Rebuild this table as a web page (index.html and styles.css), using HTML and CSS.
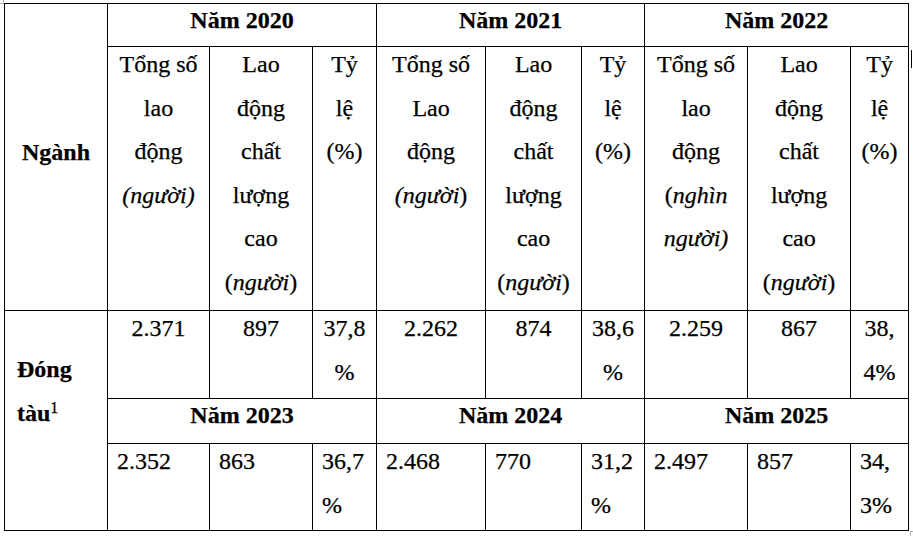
FILE: index.html
```html
<!DOCTYPE html>
<html lang="vi">
<head>
<meta charset="utf-8">
<title>Lao động ngành đóng tàu</title>
<link rel="stylesheet" href="styles.css">
</head>
<body>
<span class="mark mark-tl"></span>
<table class="tbl">
  <colgroup>
    <col class="w103"><col class="w102"><col class="w103"><col class="w64">
    <col class="w109"><col class="w96"><col class="w63">
    <col class="w103"><col class="w103"><col class="w58">
  </colgroup>
  <tr class="r-year">
    <td class="nganh" rowspan="2"><div class="t">Ngành</div></td>
    <td class="year" colspan="3"><div class="t">Năm 2020</div></td>
    <td class="year" colspan="3"><div class="t">Năm 2021</div></td>
    <td class="year" colspan="3"><div class="t">Năm 2022</div></td>
  </tr>
  <tr class="r-head">
    <td class="ctr"><div class="t">Tổng số<br>lao<br>động<br><i>(người)</i></div></td>
    <td class="ctr"><div class="t">Lao<br>động<br>chất<br>lượng<br>cao<br>(<i>người</i>)</div></td>
    <td class="ctr"><div class="t">Tỷ<br>lệ<br>(%)</div></td>
    <td class="ctr"><div class="t">Tổng số<br>Lao<br>động<br><i>(người</i>)</div></td>
    <td class="ctr"><div class="t">Lao<br>động<br>chất<br>lượng<br>cao<br>(<i>người</i>)</div></td>
    <td class="ctr"><div class="t">Tỷ<br>lệ<br>(%)</div></td>
    <td class="ctr"><div class="t">Tổng số<br>lao<br>động<br>(<i>nghìn<br>người)</i></div></td>
    <td class="ctr"><div class="t">Lao<br>động<br>chất<br>lượng<br>cao<br>(<i>người</i>)</div></td>
    <td class="ctr"><div class="t">Tỷ<br>lệ<br>(%)</div></td>
  </tr>
  <tr class="r-data1">
    <td class="branch" rowspan="3"><div class="t">Đóng<br>tàu<sup class="fn">1</sup></div></td>
    <td class="ctr"><div class="t">2.371</div></td>
    <td class="ctr"><div class="t">897</div></td>
    <td class="ctr"><div class="t">37,8<br>%</div></td>
    <td class="ctr"><div class="t">2.262</div></td>
    <td class="ctr"><div class="t">874</div></td>
    <td class="ctr"><div class="t">38,6<br>%</div></td>
    <td class="ctr"><div class="t">2.259</div></td>
    <td class="ctr"><div class="t">867</div></td>
    <td class="ctr"><div class="t">38,<br>4%</div></td>
  </tr>
  <tr class="r-year2">
    <td class="year" colspan="3"><div class="t">Năm 2023</div></td>
    <td class="year" colspan="3"><div class="t">Năm 2024</div></td>
    <td class="year" colspan="3"><div class="t">Năm 2025</div></td>
  </tr>
  <tr class="r-data2">
    <td><div class="t">2.352</div></td>
    <td><div class="t">863</div></td>
    <td><div class="t">36,7<br>%</div></td>
    <td><div class="t">2.468</div></td>
    <td><div class="t">770</div></td>
    <td><div class="t">31,2<br>%</div></td>
    <td><div class="t">2.497</div></td>
    <td><div class="t">857</div></td>
    <td><div class="t">34,<br>3%</div></td>
  </tr>
</table>
<span class="stub"></span>
<span class="mark mark-br"></span>
</body>
</html>
```
FILE: styles.css
```css
html, body {
  margin: 0;
  padding: 0;
  background: #fff;
}
body {
  position: relative;
  width: 913px;
  height: 536px;
  overflow: hidden;
  font-family: "Liberation Serif", Tinos, "DejaVu Serif", serif;
  font-size: 24px;
  color: #000;
}
.tbl {
  border-collapse: collapse;
  table-layout: fixed;
  width: 905px;
  margin: 3px 0 0 4px;
  font-family: "Liberation Serif", Tinos, "DejaVu Serif", serif;
  -webkit-text-stroke: 0.25px #000;
}
.w103 { width: 103px; }
.w102 { width: 102px; }
.w64 { width: 64px; }
.w109 { width: 109px; }
.w96 { width: 96px; }
.w63 { width: 63px; }
.w58 { width: 58px; }

.tbl td {
  border: 1px solid #000;
  padding: 0 9px;
  vertical-align: top;
  line-height: 43.6px;
  white-space: nowrap;
  text-align: left;
}
.tbl .t {
  margin-top: -4px;
}
.r-year { height: 43px; }
.r-head { height: 264px; }
.r-data1 { height: 88px; }
.r-year2 { height: 45px; }
.r-data2 { height: 87px; }

.tbl td.year {
  font-weight: bold;
  text-align: center;
}
.tbl td.year .t {
  margin-top: -5px;
}
.tbl td.ctr {
  text-align: center;
}
.tbl td.nganh {
  font-weight: bold;
  text-align: center;
  vertical-align: middle;
}
.tbl td.nganh .t {
  margin-top: -8px;
}
.tbl td.branch {
  font-weight: bold;
  vertical-align: middle;
  padding-left: 12px;
  padding-bottom: 53px;
}
.fn {
  font-weight: normal;
  font-size: 16px;
  line-height: 0;
  vertical-align: 8px;
}
.stub {
  position: absolute;
  left: 911px;
  top: 50px;
  width: 1px;
  height: 18px;
  background: #000;
}
.mark {
  position: absolute;
  width: 4px;
  height: 4px;
}
.mark-tl {
  left: -1px;
  top: -1px;
  border-right: 1px solid #b0b0b0;
  border-bottom: 1px solid #b0b0b0;
}
.mark-br {
  left: 910px;
  top: 531px;
  border-left: 1px solid #b0b0b0;
  border-top: 1px solid #b0b0b0;
}
```
